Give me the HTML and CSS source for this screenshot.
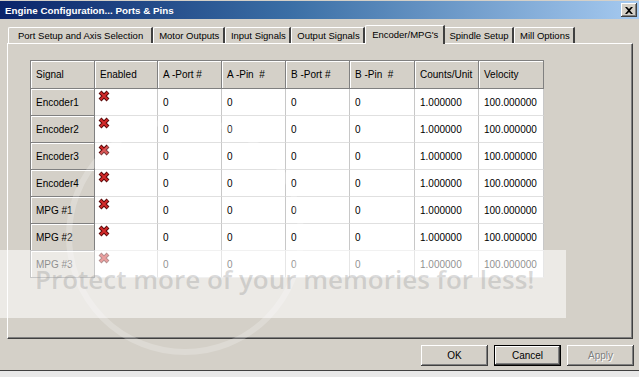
FILE: index.html
```html
<!DOCTYPE html>
<html>
<head>
<meta charset="utf-8">
<link rel="stylesheet" href="styles.css">
</head>
<body>
<div class="window">
  <div class="titlebar">
    <span class="title">Engine Configuration... Ports &amp; Pins</span>
    <span class="close"><svg width="8" height="7" viewBox="0 0 8 7"><path d="M0 0h2l2 2 2-2h2L5 3.5 8 7H6L4 5 2 7H0l3-3.5z" fill="#000"/></svg></span>
  </div>
  <div class="tabs">
    <div class="tab first">Port Setup and Axis Selection</div>
    <div class="tab">Motor Outputs</div>
    <div class="tab">Input Signals</div>
    <div class="tab">Output Signals</div>
    <div class="tab active">Encoder/MPG's</div>
    <div class="tab">Spindle Setup</div>
    <div class="tab">Mill Options</div>
  </div>
  <div class="panel">
    <div class="grid">
      <div class="cell hd">Signal</div><div class="cell hd">Enabled</div><div class="cell hd">A -Port #</div><div class="cell hd">A -Pin &nbsp;#</div><div class="cell hd">B -Port #</div><div class="cell hd">B -Pin &nbsp;#</div><div class="cell hd">Counts/Unit</div><div class="cell hd">Velocity</div>

      <div class="cell sig">Encoder1</div><div class="cell en"><svg class="x" viewBox="0 0 12 12"><path d="M2 2l8 8M10 2l-8 8" stroke="#5a0808" stroke-width="4"/><path d="M2.5 2.5l7 7M9.5 2.5l-7 7" stroke="#d42a2a" stroke-width="2"/></svg></div><div class="cell">0</div><div class="cell">0</div><div class="cell">0</div><div class="cell">0</div><div class="cell">1.000000</div><div class="cell">100.000000</div>

      <div class="cell sig">Encoder2</div><div class="cell en"><svg class="x" viewBox="0 0 12 12"><path d="M2 2l8 8M10 2l-8 8" stroke="#5a0808" stroke-width="4"/><path d="M2.5 2.5l7 7M9.5 2.5l-7 7" stroke="#d42a2a" stroke-width="2"/></svg></div><div class="cell">0</div><div class="cell">0</div><div class="cell">0</div><div class="cell">0</div><div class="cell">1.000000</div><div class="cell">100.000000</div>

      <div class="cell sig">Encoder3</div><div class="cell en"><svg class="x" viewBox="0 0 12 12"><path d="M2 2l8 8M10 2l-8 8" stroke="#5a0808" stroke-width="4"/><path d="M2.5 2.5l7 7M9.5 2.5l-7 7" stroke="#d42a2a" stroke-width="2"/></svg></div><div class="cell">0</div><div class="cell">0</div><div class="cell">0</div><div class="cell">0</div><div class="cell">1.000000</div><div class="cell">100.000000</div>

      <div class="cell sig">Encoder4</div><div class="cell en"><svg class="x" viewBox="0 0 12 12"><path d="M2 2l8 8M10 2l-8 8" stroke="#5a0808" stroke-width="4"/><path d="M2.5 2.5l7 7M9.5 2.5l-7 7" stroke="#d42a2a" stroke-width="2"/></svg></div><div class="cell">0</div><div class="cell">0</div><div class="cell">0</div><div class="cell">0</div><div class="cell">1.000000</div><div class="cell">100.000000</div>

      <div class="cell sig">MPG #1</div><div class="cell en"><svg class="x" viewBox="0 0 12 12"><path d="M2 2l8 8M10 2l-8 8" stroke="#5a0808" stroke-width="4"/><path d="M2.5 2.5l7 7M9.5 2.5l-7 7" stroke="#d42a2a" stroke-width="2"/></svg></div><div class="cell">0</div><div class="cell">0</div><div class="cell">0</div><div class="cell">0</div><div class="cell">1.000000</div><div class="cell">100.000000</div>

      <div class="cell sig">MPG #2</div><div class="cell en"><svg class="x" viewBox="0 0 12 12"><path d="M2 2l8 8M10 2l-8 8" stroke="#5a0808" stroke-width="4"/><path d="M2.5 2.5l7 7M9.5 2.5l-7 7" stroke="#d42a2a" stroke-width="2"/></svg></div><div class="cell">0</div><div class="cell">0</div><div class="cell">0</div><div class="cell">0</div><div class="cell">1.000000</div><div class="cell">100.000000</div>

      <div class="cell sig">MPG #3</div><div class="cell en"><svg class="x" viewBox="0 0 12 12"><path d="M2 2l8 8M10 2l-8 8" stroke="#5a0808" stroke-width="4"/><path d="M2.5 2.5l7 7M9.5 2.5l-7 7" stroke="#d42a2a" stroke-width="2"/></svg></div><div class="cell">0</div><div class="cell">0</div><div class="cell">0</div><div class="cell">0</div><div class="cell">1.000000</div><div class="cell">100.000000</div>
    </div>
  </div>
  <div class="buttons">
    <div class="btn">OK</div>
    <div class="btn default">Cancel</div>
    <div class="btn disabled">Apply</div>
  </div>
  <div class="taskbar"></div>
  <div class="ring"></div>
  <div class="watermark"><span>Protect more of your memories for less!</span></div>
</div>
</body>
</html>
```
FILE: styles.css
```css
html, body {
  margin: 0;
  padding: 0;
  background: #d4d0c8;
}
body {
  font-family: "Liberation Sans", Arial, sans-serif;
  font-size: 10px;
  color: #000;
}
.window {
  position: relative;
  width: 639px;
  height: 377px;
  overflow: hidden;
  background: #d4d0c8;
}
.titlebar {
  height: 18px;
  margin-top: 1px;
  background: linear-gradient(to right, #0a246a 0%, #3a6ea5 45%, #a6caf0 100%);
  display: flex;
  align-items: center;
  justify-content: space-between;
  padding: 0 2px 0 5px;
}
.title {
  color: #fff;
  font-weight: bold;
  font-size: 9.8px;
}
.close {
  width: 16px;
  height: 14px;
  box-sizing: border-box;
  background: #d4d0c8;
  box-shadow: inset -1px -1px #404040, inset 1px 1px #fff, inset -2px -2px #808080;
  display: flex;
  align-items: center;
  justify-content: center;
}
.tabs {
  display: flex;
  align-items: flex-end;
  height: 24px;
  padding-left: 8px;
  font-size: 9.5px;
}
.tab {
  height: 16px;
  box-sizing: border-box;
  padding: 2px 3.5px 0 5px;
  border-top: 1px solid #fff;
  border-left: 1px solid #fff;
  border-right: 2px solid #404040;
  border-top-left-radius: 2px;
  white-space: nowrap;
  line-height: 12px;
}
.tab.first {
  padding: 2px 8px 0 9px;
}
.tab.active {
  height: 19px;
  margin: 0 -2px 0 0;
  padding: 3px 5px 0 6px;
  position: relative;
  z-index: 1;
  top: 1px;
  background: #d4d0c8;
}
.panel {
  margin-left: 7px;
  width: 626px;
  height: 296px;
  box-sizing: border-box;
  border-top: 1px solid #fff;
  border-left: 1px solid #fff;
  border-right: 1px solid #404040;
  border-bottom: 1px solid #404040;
  box-shadow: inset -1px -1px #808080;
  padding: 16px 0 0 22px;
}
.grid {
  display: grid;
  grid-template-columns: 64px 63px 64px 64px 64px 65px 64px 65px;
  grid-template-rows: 28px;
  grid-auto-rows: 27px;
  width: max-content;
  border-top: 1px solid #808080;
  border-left: 1px solid #808080;
}
.cell {
  display: flex;
  align-items: center;
  box-sizing: border-box;
  padding-left: 5px;
  background: #fff;
  border-right: 1px solid #c8c8c8;
  border-bottom: 1px solid #e0e0e0;
  white-space: nowrap;
}
.cell.hd, .cell.sig {
  background: #d4d0c8;
  border-right: 1px solid #808080;
  border-bottom: 1px solid #808080;
  box-shadow: inset 1px 1px #fff;
}
.cell.en {
  align-items: flex-start;
  padding: 1px 0 0 3px;
}
.x {
  width: 12px;
  height: 12px;
}
.buttons {
  display: flex;
  justify-content: flex-end;
  gap: 6px;
  padding: 6px 5px 0 0;
}
.btn {
  width: 67px;
  height: 21px;
  box-sizing: border-box;
  display: flex;
  align-items: center;
  justify-content: center;
  background: #d4d0c8;
  box-shadow: inset -1px -1px #404040, inset 1px 1px #fff, inset -2px -2px #808080;
}
.btn.default {
  border: 1px solid #000;
}
.btn.disabled {
  color: #808080;
  text-shadow: 1px 1px #fff;
}
.taskbar {
  margin-top: 4px;
  height: 8px;
  border-top: 1px solid #404040;
  background: #e8e8e8;
}
.ring {
  position: absolute;
  left: 66px;
  top: 117px;
  width: 226px;
  height: 226px;
  border-radius: 50%;
  border: 6px solid rgba(255, 255, 255, 0.22);
  pointer-events: none;
}
.watermark {
  position: absolute;
  left: 0;
  top: 250px;
  width: 566px;
  height: 68px;
  background: rgba(255, 255, 255, 0.55);
  box-sizing: border-box;
  padding: 14px 0 0 35px;
}
.watermark span {
  font-family: "Open Sans", "DejaVu Sans", sans-serif;
  font-weight: 600;
  font-size: 26px;
  line-height: 30px;
  color: rgba(150, 150, 150, 0.35);
  white-space: nowrap;
}
```
